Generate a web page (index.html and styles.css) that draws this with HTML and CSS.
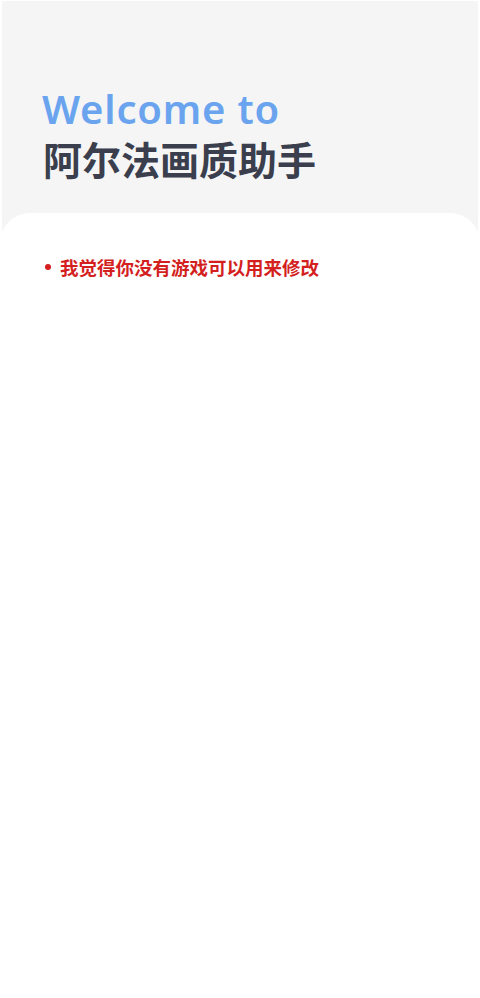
FILE: index.html
```html
<!DOCTYPE html>
<html lang="zh-CN">
<head>
<meta charset="utf-8">
<title>阿尔法画质助手</title>
<link rel="stylesheet" href="styles.css">
</head>
<body>
<div class="page">
  <header class="hero">
    <h1 class="welcome">Welcome to</h1>
    <h2 class="app-name">阿尔法画质助手</h2>
  </header>
  <main class="card">
    <ul class="notes">
      <li class="note">我觉得你没有游戏可以用来修改</li>
    </ul>
  </main>
</div>
</body>
</html>
```

FILE: styles.css
```css
html, body {
  margin: 0;
  padding: 0;
  background: #ffffff;
}
body {
  font-family: "Noto Sans", "Noto Sans CJK SC", sans-serif;
  width: 480px;
  height: 998px;
  overflow: hidden;
}
.page {
  padding: 1px 2px 0;
}
.hero {
  background: #f5f5f5;
  height: 249px;
  padding: 86px 0 0 40px;
  box-sizing: border-box;
}
.welcome {
  margin: 0;
  font-size: 40px;
  line-height: 44px;
  font-weight: 600;
  color: #6aa3ee;
  letter-spacing: 0.8px;
}
.app-name {
  margin: 4px 0 0 1px;
  font-family: "Noto Sans CJK SC", sans-serif;
  font-size: 39px;
  line-height: 46px;
  font-weight: 700;
  color: #3a3e4d;
  letter-spacing: 0;
}
.card {
  background: #ffffff;
  margin: -37px -2px 0;
  border-radius: 30px 30px 0 0;
  height: 786px;
  padding: 42px 0 0 44px;
  box-sizing: border-box;
}
.notes {
  list-style: none;
  margin: 0;
  padding: 0;
}
.note {
  position: relative;
  padding-left: 16px;
  font-family: "Noto Sans CJK SC", sans-serif;
  font-size: 18.5px;
  line-height: 24px;
  font-weight: 700;
  color: #d41f1f;
}
.note::before {
  content: "";
  position: absolute;
  left: 1px;
  top: 9px;
  width: 6px;
  height: 6px;
  border-radius: 50%;
  background: #d41f1f;
}
```
